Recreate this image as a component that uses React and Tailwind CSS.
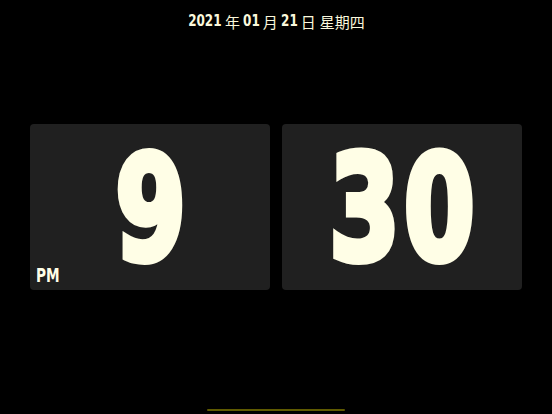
const digit = "font-['DejaVu_Sans',sans-serif] font-bold inline-block"
const big = `${digit} text-[145px] leading-none text-[#fffee6] scale-x-[0.7] [-webkit-text-stroke:8px_#fffee6]`

function Card({ children }) {
  return (
    <div className="relative w-[240px] h-[166px] rounded-[4px] bg-[#202020] flex items-center justify-center">
      {children}
    </div>
  )
}

export default function App() {
  return (
    <div className="w-[552px] h-[414px] bg-black flex flex-col items-center overflow-hidden">
      <div className="mt-[10px] h-[22px] flex items-center gap-[2px] text-[#fbf8dc] text-[15px] leading-none font-['Noto_Sans_CJK_SC',sans-serif]">
        <span className={`${digit} scale-x-[0.8] -mx-[3px]`}>2021</span>
        <span>年</span>
        <span className={`${digit} scale-x-[0.8] -mx-[1px]`}>01</span>
        <span>月</span>
        <span className={`${digit} scale-x-[0.8] -mx-[1px]`}>21</span>
        <span>日</span>
        <span className="ml-[2px]">星期四</span>
      </div>

      <div className="mt-[92px] flex gap-[12px]">
        <Card>
          <span className={`${big} mt-[2px]`}>9</span>
          <span className={`${digit} absolute left-[6px] bottom-[5px] text-[19px] leading-none text-[#fffee6] scale-x-[0.72] origin-left`}>
            PM
          </span>
        </Card>
        <Card>
          <span className={`${big} mt-[2px] tracking-[6px] pl-[6px]`}>30</span>
        </Card>
      </div>

      <div className="mt-auto mb-[3px] w-[138px] h-[2px] rounded-full bg-[#5f5a00]" />
    </div>
  )
}
